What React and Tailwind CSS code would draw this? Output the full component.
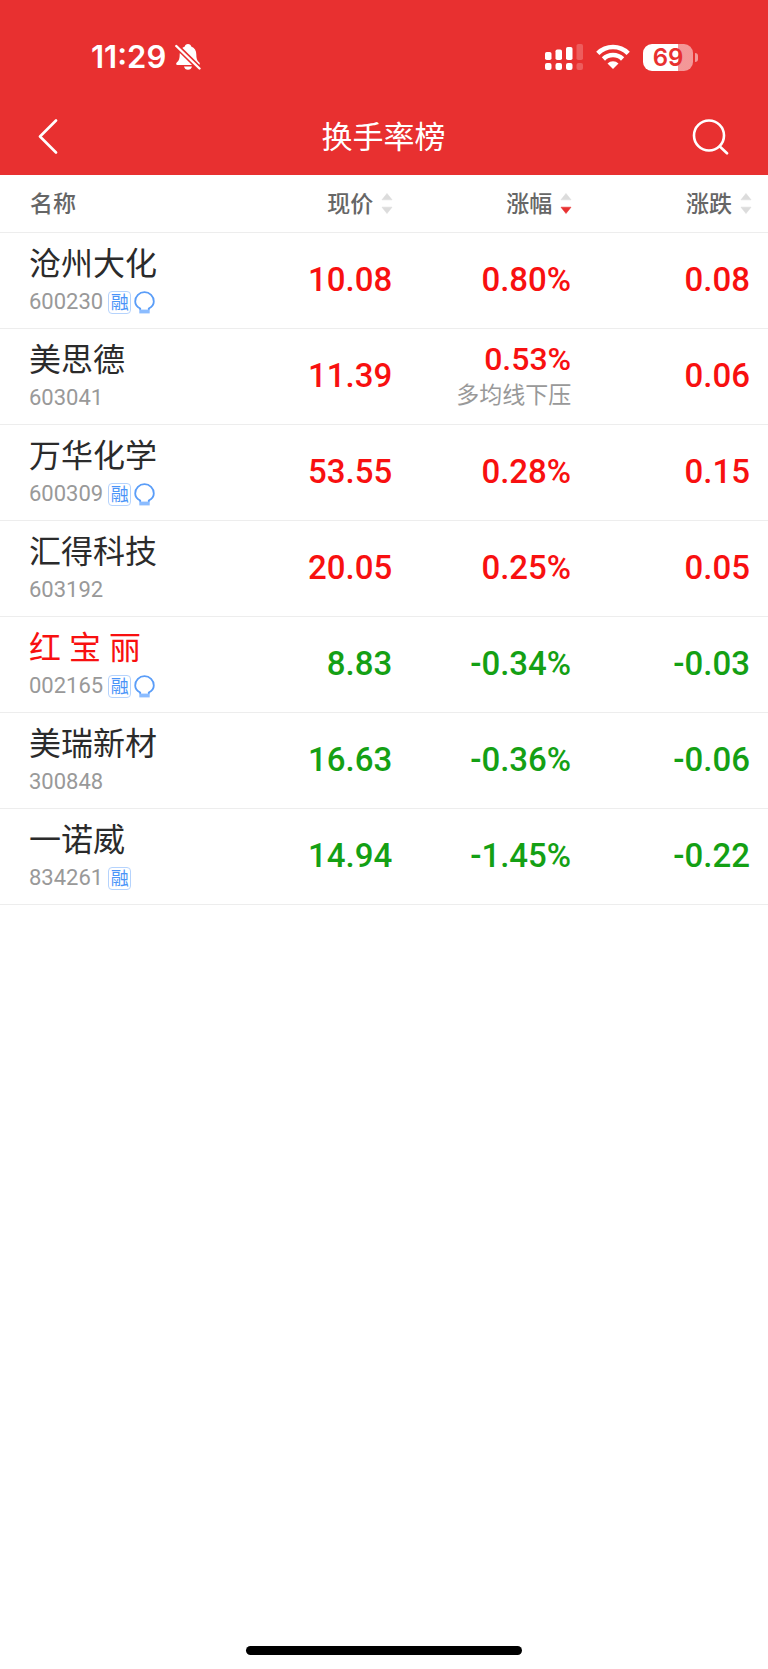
const stocks = [
  { name: '沧州大化', code: '600230', margin: true, tip: true, price: '10.08', pct: '0.80%', change: '0.08' },
  { name: '美思德', code: '603041', price: '11.39', pct: '0.53%', note: '多均线下压', change: '0.06' },
  { name: '万华化学', code: '600309', margin: true, tip: true, price: '53.55', pct: '0.28%', change: '0.15' },
  { name: '汇得科技', code: '603192', price: '20.05', pct: '0.25%', change: '0.05' },
  { name: '红 宝 丽', code: '002165', margin: true, tip: true, highlight: true, price: '8.83', pct: '-0.34%', change: '-0.03' },
  { name: '美瑞新材', code: '300848', price: '16.63', pct: '-0.36%', change: '-0.06' },
  { name: '一诺威', code: '834261', margin: true, price: '14.94', pct: '-1.45%', change: '-0.22' },
];

function MutedBell() {
  return (
    <svg className="h-[28px] w-[26px]" viewBox="0 0 26 28" aria-hidden="true">
      <path
        fill="#fff"
        d="M13 1c-1.8 0-3 1-3.2 2.5C6.300 5 4.700 7.600 4.700 11.200c0 4.300-.7 6.300-2.700 8.100-1.100 1-1.300 2.700.5 2.700h21c1.800 0 1.600-1.700.5-2.700-2-1.800-2.700-3.800-2.700-8.100 0-3.600-1.600-6.200-5.100-7.700C16 2 14.800 1 13 1ZM9 23.500h8c-.4 2-2 3.300-4 3.300s-3.600-1.300-4-3.300Z"
      />
      <path stroke="#e83030" strokeWidth="5.400" d="M0 1.500 25 26" />
      <path stroke="#fff" strokeWidth="2.400" strokeLinecap="round" d="M1.300 3 24.500 25.500" />
    </svg>
  );
}

function Signal() {
  return (
    <svg className="h-[28px] w-[38px]" viewBox="0 0 38 28" fill="#fff" aria-hidden="true">
      <rect x="0" y="9" width="6.500" height="8" rx="1.800" />
      <rect x="10.500" y="6.500" width="6.500" height="10.500" rx="1.800" />
      <rect x="21" y="4" width="6.500" height="13" rx="1.800" />
      <rect x="31.500" y="1" width="6.500" height="16" rx="1.800" opacity=".22" />
      <rect x="0" y="20" width="6.500" height="7" rx="2" />
      <rect x="10.500" y="20" width="6.500" height="7" rx="2" />
      <rect x="21" y="20" width="6.500" height="7" rx="2" />
      <rect x="31.500" y="20" width="6.500" height="7" rx="2" opacity=".22" />
    </svg>
  );
}

function Wifi() {
  return (
    <svg className="h-[26px] w-[34px]" viewBox="0 0 34 26" fill="none" stroke="#fff" strokeWidth="4.600" aria-hidden="true">
      <path d="M1.800 9.300a21.600 21.600 0 0 1 30.400 0" />
      <path d="M7.400 15a13.600 13.600 0 0 1 19.200 0" />
      <path fill="#fff" stroke="none" d="M17 25l-5.500-5.500a7.800 7.800 0 0 1 11 0Z" />
    </svg>
  );
}

function Battery() {
  return (
    <div className="flex items-center gap-[2px]">
      <div className="flex h-[27px] w-[50px] items-center justify-center rounded-[9px] bg-linear-to-r from-white from-70% to-white/50 to-70%">
        <span className="font-['Inter',sans-serif] text-[24px] leading-[27px] font-semibold text-[#e83030]">69</span>
      </div>
      <div className="h-[9px] w-[3px] rounded-r-full bg-white/50" />
    </div>
  );
}

function Bulb() {
  return (
    <svg className="h-[23px] w-[21px]" viewBox="0 0 21 23" fill="none" aria-hidden="true">
      <path stroke="#5a9df8" strokeWidth="1.800" d="M6.200 19v-1.500C3 15.800 1.200 13.600 1.200 10.400a9.300 9.300 0 0 1 18.600 0c0 3.200-1.800 5.400-5 7.100V19" />
      <path fill="#8bbcff" d="M5.300 18.600h10.400v3.800H5.300z" />
    </svg>
  );
}

function SortHeader({ label, active }) {
  return (
    <button type="button" className="inline-flex items-center gap-[8px] align-top">
      <span className="pt-[3px]">{label}</span>
      <svg className="h-[21px] w-[12px]" viewBox="0 0 12 21" fill="#dcdcdc" aria-hidden="true">
        <path d="M6 .5 11 6.800H1Z" stroke="#dcdcdc" strokeWidth=".6" strokeLinejoin="round" />
        <path d="M6 20.500 1 14.200h10Z" fill={active ? '#e83030' : '#dcdcdc'} stroke={active ? '#e83030' : '#dcdcdc'} strokeWidth=".6" strokeLinejoin="round" />
      </svg>
    </button>
  );
}

export default function App() {
  return (
    <div className="flex min-h-screen flex-col bg-white font-['Roboto','Noto_Sans_CJK_SC',sans-serif]">
      <header className="bg-[#e83030] text-white">
        <div className="flex h-[98px] items-center justify-between pt-[16px] pr-[70px] pl-[91px]">
          <div className="flex items-center gap-[9px]">
            <span className="font-['Inter',sans-serif] text-[31px] leading-[36px] font-semibold">11:29</span>
            <MutedBell />
          </div>
          <div className="flex items-center gap-[13px]">
            <Signal />
            <Wifi />
            <Battery />
          </div>
        </div>
        <nav className="grid h-[77px] grid-cols-[1fr_auto_1fr] items-center pr-[38px] pl-[37px]">
          <button type="button" aria-label="返回" className="justify-self-start">
            <svg className="h-[36px] w-[22px]" viewBox="0 0 22 36" fill="none" stroke="#fff" strokeWidth="2.600" strokeLinecap="round" strokeLinejoin="round">
              <path d="M19 1.500 3 17.500l16 16" />
            </svg>
          </button>
          <h1 className="pt-[3px] text-[31px] leading-[40px] font-normal">换手率榜</h1>
          <button type="button" aria-label="搜索" className="justify-self-end">
            <svg className="h-[36px] w-[38px]" viewBox="0 0 38 36" fill="none" stroke="#fff" strokeWidth="2.600" strokeLinecap="round">
              <circle cx="17" cy="16.500" r="15" />
              <path d="M27.800 27.500 35 34.300" />
            </svg>
          </button>
        </nav>
      </header>

      <main>
        <table className="w-full table-fixed border-collapse">
          <thead>
            <tr className="h-[57px] border-b border-[#ededed] text-[23px] leading-[32px] text-[#666]">
              <th className="w-[51.200%] p-0 font-medium">
                <div className="flex items-center justify-between pl-[30px]">
                  <span className="pt-[3px]">名称</span>
                  <SortHeader label="现价" />
                </div>
              </th>
              <th className="w-[23.300%] p-0 text-right font-medium">
                <SortHeader label="涨幅" active />
              </th>
              <th className="p-0 pr-[16px] text-right font-medium">
                <SortHeader label="涨跌" />
              </th>
            </tr>
          </thead>
          <tbody>
            {stocks.map((s) => (
              <tr
                key={s.code}
                className={`h-[96px] border-b border-[#ededed] text-right text-[33px] leading-[40px] font-medium ${s.pct.startsWith('-') ? 'text-[#14a014]' : 'text-[#f81010]'}`}
              >
                <td className="p-0 pr-[1px]">
                  <div className="flex items-center justify-between pl-[29px]">
                    <div className="pt-[2px] text-left font-normal">
                      <div className={`text-[32px] leading-[42px] ${s.highlight ? 'text-[#f81010]' : 'text-[#2b2b2b]'}`}>{s.name}</div>
                      <div className="flex h-[34px] items-center text-[22px] leading-[34px] text-[#999]">
                        <span>{s.code}</span>
                        {s.margin && (
                          <span className="ml-[5px] flex h-[23px] w-[23px] items-center justify-center rounded-[4px] border border-[#b5d3fd] text-[18px] leading-[21px] text-[#4a94f8]">
                            融
                          </span>
                        )}
                        {s.tip && (
                          <span className="ml-[3px]">
                            <Bulb />
                          </span>
                        )}
                      </div>
                    </div>
                    <span>{s.price}</span>
                  </div>
                </td>
                <td className="p-0 pr-[1px]">
                  {s.note ? (
                    <div className="pt-[2px]">
                      <div className="text-[32px] leading-[38px]">{s.pct}</div>
                      <div className="text-[23px] leading-[36px] font-normal text-[#999]">{s.note}</div>
                    </div>
                  ) : (
                    s.pct
                  )}
                </td>
                <td className="p-0 pr-[18px]">{s.change}</td>
              </tr>
            ))}
          </tbody>
        </table>
      </main>

      <footer className="mt-auto flex justify-center pb-[14px]">
        <div className="h-[9px] w-[36%] rounded-full bg-black" />
      </footer>
    </div>
  );
}
